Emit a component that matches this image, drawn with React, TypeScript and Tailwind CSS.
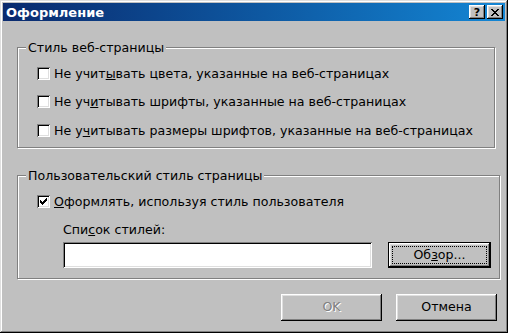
import React from "react";

function CheckBox({ checked = false }: { checked?: boolean }) {
  return (
    <span className="flex h-[13px] w-[13px] shrink-0 items-center justify-center bg-white shadow-[inset_1px_1px_0_#808080,inset_-1px_-1px_0_#fff,inset_2px_2px_0_#000,inset_-2px_-2px_0_#dfdfdf]">
      {checked && (
        <svg width="7" height="7" viewBox="0 0 7 7" shapeRendering="crispEdges">
          <rect x="6" y="0" width="1" height="1" fill="#000" />
          <rect x="5" y="1" width="2" height="1" fill="#000" />
          <rect x="0" y="2" width="1" height="1" fill="#000" />
          <rect x="4" y="2" width="3" height="1" fill="#000" />
          <rect x="0" y="3" width="2" height="1" fill="#000" />
          <rect x="3" y="3" width="3" height="1" fill="#000" />
          <rect x="0" y="4" width="5" height="1" fill="#000" />
          <rect x="1" y="5" width="3" height="1" fill="#000" />
          <rect x="2" y="6" width="1" height="1" fill="#000" />
        </svg>
      )}
    </span>
  );
}

function CheckRow({
  checked,
  className = "",
  children,
}: {
  checked?: boolean;
  className?: string;
  children: React.ReactNode;
}) {
  return (
    <div className={`ml-[11px] flex h-[17px] items-center gap-[4px] ${className}`}>
      <CheckBox checked={checked} />
      <span className="whitespace-nowrap leading-[17px]">{children}</span>
    </div>
  );
}

function CaptionButton({ children }: { children: React.ReactNode }) {
  return (
    <div className="flex h-[14px] w-[16px] items-center justify-center bg-[#c0c0c0] shadow-[inset_-1px_-1px_0_#000,inset_1px_1px_0_#fff,inset_-2px_-2px_0_#808080,inset_2px_2px_0_#dfdfdf]">
      {children}
    </div>
  );
}

export default function App() {
  return (
    <div className="flex h-[333px] w-[508px] flex-col bg-[#c0c0c0] p-[3px] font-['DejaVu_Sans',sans-serif] text-[12.6px] text-black shadow-[inset_-1px_-1px_0_#000,inset_1px_1px_0_#dfdfdf,inset_-2px_-2px_0_#808080,inset_2px_2px_0_#fff]">
      {/* title bar */}
      <div className="flex h-[18px] shrink-0 items-center bg-linear-to-r from-[#0a2a6e] to-[#1486d4]">
        <span className="pl-[3px] text-[13px] font-bold leading-none text-white">Оформление</span>
        <div className="ml-auto flex gap-[2px] pr-[2px]">
          <CaptionButton>
            <span className="pt-[1px] text-[11px] font-bold leading-none">?</span>
          </CaptionButton>
          <CaptionButton>
            <svg width="8" height="7" viewBox="0 0 8 7" shapeRendering="crispEdges">
              <path
                d="M0 0h2v1h-2zM6 0h2v1h-2zM1 1h2v1h-2zM5 1h2v1h-2zM2 2h4v1h-4zM3 3h2v1h-2zM2 4h4v1h-4zM1 5h2v1h-2zM5 5h2v1h-2zM0 6h2v1h-2zM6 6h2v1h-2z"
                fill="#000"
              />
            </svg>
          </CaptionButton>
        </div>
      </div>

      <div className="flex flex-col pl-[14px]">
        <fieldset className="mt-[18px] w-[478px] border border-[#808080] px-[8px] pt-[9px] pb-[8px] shadow-[1px_1px_0_#fff,inset_1px_1px_0_#fff]">
          <legend className="bg-[#c0c0c0] px-[2px] leading-[17px]">Стиль веб-страницы</legend>
          <CheckRow>
            Не учит<span className="underline">ы</span>вать цвета, указанные на веб-страницах
          </CheckRow>
          <CheckRow className="mt-[11px]">
            Не уч<span className="underline">и</span>тывать шрифты, указанные на веб-страницах
          </CheckRow>
          <CheckRow className="mt-[12px]">
            Не у<span className="underline">ч</span>итывать размеры шрифтов, указанные на веб-страницах
          </CheckRow>
        </fieldset>

        <fieldset className="mt-[19px] w-[478px] border border-[#808080] px-[8px] pt-[9px] pb-[10px] shadow-[1px_1px_0_#fff,inset_1px_1px_0_#fff]">
          <legend className="bg-[#c0c0c0] px-[2px] leading-[17px]">Пользовательский стиль страницы</legend>
          <CheckRow checked>
            <span className="underline">О</span>формлять, используя стиль пользователя
          </CheckRow>
          <div className="ml-[37px] mt-[11px] h-[17px] leading-[17px]">
            Спи<span className="underline">с</span>ок стилей:
          </div>
          <div className="mt-[4px] flex items-start">
            <div className="ml-[37px] h-[26px] w-[309px] bg-white shadow-[inset_1px_1px_0_#808080,inset_-1px_-1px_0_#fff,inset_2px_2px_0_#000,inset_-2px_-2px_0_#dfdfdf]" />
            <div className="ml-[16px] h-[26px] w-[103px] border border-black bg-[#c0c0c0] p-[3px] shadow-[inset_-1px_-1px_0_#000,inset_1px_1px_0_#fff,inset_-2px_-2px_0_#808080,inset_2px_2px_0_#dfdfdf]">
              <div className="flex h-full w-full items-center justify-center border border-dotted border-black leading-none">
                Об<span className="underline">з</span>ор...
              </div>
            </div>
          </div>
        </fieldset>
      </div>

      <div className="mt-[15px] flex justify-end gap-[14px] pr-[8px]">
        <div className="flex h-[27px] w-[101px] items-center justify-center bg-[#c0c0c0] text-[#808080] shadow-[inset_-1px_-1px_0_#000,inset_1px_1px_0_#fff,inset_-2px_-2px_0_#808080,inset_2px_2px_0_#dfdfdf] [text-shadow:1px_1px_0_#fff]">
          OK
        </div>
        <div className="flex h-[27px] w-[101px] items-center justify-center bg-[#c0c0c0] shadow-[inset_-1px_-1px_0_#000,inset_1px_1px_0_#fff,inset_-2px_-2px_0_#808080,inset_2px_2px_0_#dfdfdf]">
          Отмена
        </div>
      </div>
    </div>
  );
}
